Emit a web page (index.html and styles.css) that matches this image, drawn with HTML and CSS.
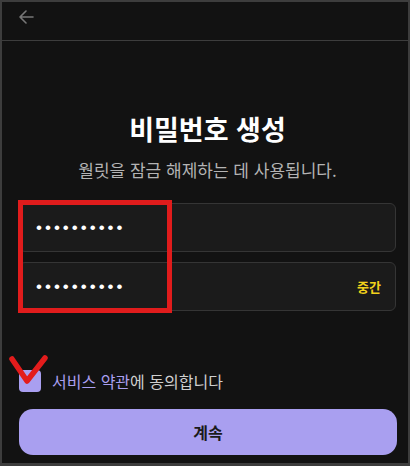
FILE: index.html
```html
<!DOCTYPE html>
<html lang="ko">
  <head>
    <meta charset="UTF-8" />
    <meta name="viewport" content="width=device-width, initial-scale=1.0" />
    <title>비밀번호 생성</title>
    <link rel="stylesheet" href="styles.css">
  </head>
  <body>
    <div class="frame">
      <header class="top-bar">
        <span class="back-btn">
          <svg width="16" height="14" viewBox="0 0 16 14">
            <path d="M8 1 L2 7 L8 13 M2 7 H15" fill="none" stroke="#777" stroke-width="1.6" stroke-linecap="round" stroke-linejoin="round" />
          </svg>
        </span>
      </header>

      <main class="content">
        <h1 class="title">비밀번호 생성</h1>
        <p class="subtitle">월릿을 잠금 해제하는 데 사용됩니다.</p>

        <div class="fields">
          <div class="field">
            <span class="dots">••••••••••</span>
          </div>
          <div class="field">
            <span class="dots">••••••••••</span>
            <span class="strength">중간</span>
          </div>
          <div class="mark-box"></div>
        </div>

        <label class="agree">
          <span class="checkbox">
            <svg class="red-check" width="42" height="32" viewBox="0 0 42 32">
              <path d="M4 5 L19 27 L37 4" fill="none" stroke="#e31c1c" stroke-width="5.5" stroke-linecap="round" stroke-linejoin="round" />
            </svg>
          </span>
          <span class="agree-text"><span class="link">서비스 약관</span>에 동의합니다</span>
        </label>

        <button class="continue-btn">계속</button>
      </main>
    </div>
  </body>
</html>
```

FILE: styles.css
```css
body {
  margin: 0;
  padding: 0;
  background-color: #121212;
  font-family: "Noto Sans CJK KR", "Noto Sans", sans-serif;
}
.frame {
  box-sizing: border-box;
  width: 410px;
  height: 466px;
  border: 2px solid #3d3d3d;
  border-bottom-width: 3px;
  background-color: #121212;
  overflow: hidden;
}
.top-bar {
  height: 38px;
  border-bottom: 1px solid #3d3d3d;
  display: flex;
  align-items: center;
  padding-left: 16px;
}
.back-btn {
  display: flex;
  margin-top: -8px;
}
.content {
  padding: 0 12px 0 17px;
}
.title {
  margin: 70px 0 0;
  text-align: center;
  color: #ffffff;
  font-size: 27px;
  font-weight: bold;
  line-height: 36px;
}
.subtitle {
  margin: 11px 0 0;
  text-align: center;
  color: #b4b4b4;
  font-size: 17px;
  line-height: 24px;
}
.fields {
  position: relative;
  margin-top: 21px;
  display: flex;
  flex-direction: column;
  gap: 10px;
}
.field {
  box-sizing: border-box;
  height: 49px;
  background-color: #1b1b1b;
  border: 1px solid #353535;
  border-radius: 6px;
  display: flex;
  align-items: center;
  justify-content: space-between;
  padding: 0 14px 0 16px;
}
.dots {
  color: #ffffff;
  font-family: "Liberation Sans", sans-serif;
  font-size: 17px;
  letter-spacing: 3px;
}
.strength {
  color: #f2d21b;
  font-size: 13px;
  font-weight: bold;
}
.mark-box {
  position: absolute;
  left: -1px;
  top: -3px;
  width: 154px;
  height: 113px;
  box-sizing: border-box;
  border: 5px solid #e01c1c;
}
.agree {
  margin-top: 58px;
  display: flex;
  align-items: center;
  gap: 11px;
}
.checkbox {
  position: relative;
  width: 22px;
  height: 22px;
  border-radius: 4px;
  background-color: #a99ff0;
}
.red-check {
  position: absolute;
  left: -11px;
  top: -16px;
}
.agree-text {
  color: #cfcfcf;
  font-size: 16px;
}
.link {
  color: #a99ff0;
}
.continue-btn {
  display: block;
  box-sizing: border-box;
  width: 378px;
  height: 46px;
  margin: 16px 0 0;
  border: none;
  border-radius: 14px;
  background-color: #a99ff0;
  color: #1a1a1a;
  font-family: "Noto Sans CJK KR", sans-serif;
  font-size: 16px;
  font-weight: bold;
}
```
